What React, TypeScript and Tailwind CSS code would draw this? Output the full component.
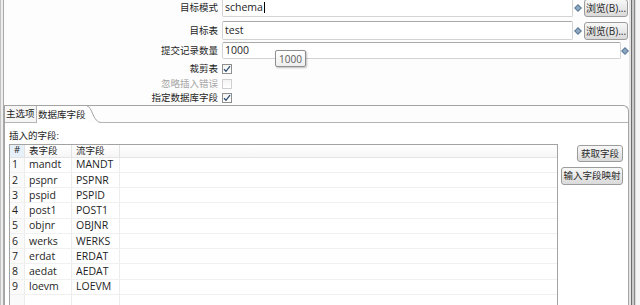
import React from "react";

const fields: [string, string][] = [
  ["mandt", "MANDT"],
  ["pspnr", "PSPNR"],
  ["pspid", "PSPID"],
  ["post1", "POST1"],
  ["objnr", "OBJNR"],
  ["werks", "WERKS"],
  ["erdat", "ERDAT"],
  ["aedat", "AEDAT"],
  ["loevm", "LOEVM"],
];

function Diamond() {
  return (
    <svg width="8" height="8" viewBox="0 0 8 8">
      <polygon points="4,0 8,4 4,8 0,4" fill="#5a7b99" />
      <polygon points="4,1.5 6.5,4 4,6.5 1.5,4" fill="#8fa9c0" />
    </svg>
  );
}

function Check({ checked, disabled }: { checked?: boolean; disabled?: boolean }) {
  return (
    <div
      className={
        "w-[10px] h-[10px] border flex items-center justify-center bg-linear-to-b from-[#f4f4f4] to-[#ffffff] " +
        (disabled ? "border-[#d0d0d0]" : "border-[#8e8f8f]")
      }
    >
      {checked && (
        <svg width="8" height="8" viewBox="0 0 8 8">
          <path d="M1 4.2 L3 6.3 L7 1.2" fill="none" stroke="#2f4f6f" strokeWidth="1.3" />
        </svg>
      )}
    </div>
  );
}

function Btn({ children, className = "" }: { children: React.ReactNode; className?: string }) {
  return (
    <div
      className={
        "flex items-center justify-center border border-[#9c9c9c] rounded-[3px] bg-linear-to-b from-[#f8f8f8] to-[#dadada] text-[#2a2a2a] " +
        className
      }
    >
      {children}
    </div>
  );
}

const input =
  "h-full border border-[#d3d3d3] border-t-[#a9a9a9] rounded-[2px] bg-white pl-[2px] flex items-center";

export default function App() {
  return (
    <div className="w-[640px] h-[305px] overflow-hidden flex bg-[#fdfdfd] text-[10px] text-[#1e1e1e] font-['Open_Sans','Noto_Sans_CJK_SC',sans-serif] leading-none">
      {/* 左侧窗口边框 */}
      <div className="w-[4px] shrink-0 border-l border-l-[#c2c2c2] border-r border-r-[#a8a8a8] bg-[#eeeeee]" />

      <div className="flex-1 flex flex-col min-w-0">
        {/* 表单 */}
        <div className="-mt-[2px] flex flex-col">
          <div className="flex h-[19px] items-center">
            <div className="w-[214px] text-right text-[9.5px]">目标模式</div>
            <div className={"ml-[4px] flex-1 text-[10.5px] " + input + " border-t-[#6f7f8f]"}>
              schema
              <span className="w-[1px] h-[11px] bg-black ml-[1px]" />
            </div>
            <div className="w-[10px] flex justify-center">
              <Diamond />
            </div>
            <Btn className="ml-[1px] mr-[1px] w-[44px] h-[18px]">浏览(B)...</Btn>
          </div>
          <div className="mt-[4px] flex h-[19px] items-center">
            <div className="w-[214px] text-right text-[9.5px]">目标表</div>
            <div className={"ml-[4px] flex-1 text-[10.5px] " + input}>test</div>
            <div className="w-[10px] flex justify-center">
              <Diamond />
            </div>
            <Btn className="ml-[1px] mr-[1px] w-[44px] h-[18px]">浏览(B)...</Btn>
          </div>
          <div className="mt-[2px] flex h-[17px] items-center">
            <div className="w-[214px] text-right text-[9.5px]">提交记录数量</div>
            <div className={"ml-[4px] flex-1 text-[10.5px] " + input}>1000</div>
            <div className="w-[8px] flex justify-center">
              <Diamond />
            </div>
          </div>
          <div className="mt-[2px] flex h-[15px] items-center">
            <div className="w-[214px] text-right text-[9.5px]">裁剪表</div>
            <div className="ml-[4px]">
              <Check checked />
            </div>
          </div>
          <div className="flex h-[15px] items-center">
            <div className="w-[214px] text-right text-[9.5px] text-[#a6a6a6]">忽略插入错误</div>
            <div className="ml-[4px]">
              <Check disabled />
            </div>
          </div>
          <div className="flex h-[14px] items-center">
            <div className="w-[214px] text-right text-[9.5px]">指定数据库字段</div>
            <div className="ml-[4px]">
              <Check checked />
            </div>
          </div>
        </div>

        {/* 选项卡 */}
        <div className="flex-1 flex flex-col border border-[#a4a4a4] border-b-0 rounded-tr-[6px] min-h-0">
          <div className="flex h-[17px] text-[9.5px]">
            <div className="w-[32px] flex items-center pl-[1px] border-r border-b border-[#b4b4b4] bg-[#f6f6f6]">
              主选项
            </div>
            <div className="flex items-center pl-[1px] pr-[1px] bg-white">数据库字段</div>
            <svg width="14" height="17" viewBox="0 0 14 17" className="shrink-0">
              <path d="M0 0 C5 0 6 16.5 14 16.5" fill="#ffffff" stroke="#a4a4a4" strokeWidth="1" />
            </svg>
            <div className="flex-1 border-b border-[#b4b4b4]" />
          </div>

          <div className="flex-1 flex flex-col pl-[4px] pr-[5px] bg-white min-h-0">
            <div className="mt-[5px] h-[15px] flex items-center text-[9.5px]">插入的字段:</div>
            <div className="mt-[1px] flex-1 flex gap-[3px] min-h-0">
              <div className="flex-1 border border-b-0 border-[#a3a3a3] flex flex-col overflow-hidden text-[10.5px]">
                <div className="h-[16px] flex border-b border-[#e4e4e4] bg-linear-to-b from-[#ffffff] to-[#f6f6f6] text-[9.5px]">
                  <div className="w-[15px] relative border-r border-[#e2e2e2] bg-[#e6f0f8] flex items-end justify-center pb-[2px]">
                    <svg width="5" height="3" viewBox="0 0 5 3" className="absolute top-[1px] left-[5px]">
                      <path d="M0.5 2.5 L2.5 0.5 L4.5 2.5" fill="none" stroke="#7a8a9a" strokeWidth="0.8" />
                    </svg>
                    #
                  </div>
                  <div className="w-[47px] border-r border-[#e2e2e2] flex items-center pl-[4px]">表字段</div>
                  <div className="w-[48px] border-r border-[#e2e2e2] flex items-center pl-[4px]">流字段</div>
                  <div className="flex-1" />
                </div>
                {[...fields, ["", ""] as [string, string]].map(([a, b], i) => (
                  <div key={i} className="h-[15.25px] shrink-0 flex border-b border-[#f0f0f0]">
                    <div className="w-[15px] border-r border-[#ececec] flex items-center pl-[2px] bg-[#fafafa]">
                      {a ? i + 1 : ""}
                    </div>
                    <div className="w-[47px] border-r border-[#ececec] flex items-center pl-[4px]">{a}</div>
                    <div className="w-[48px] border-r border-[#ececec] flex items-center pl-[4px]">{b}</div>
                    <div className="flex-1" />
                  </div>
                ))}
              </div>
              <div className="w-[62px] flex flex-col items-end gap-[5px] pt-[1px] text-[9.5px]">
                <Btn className="w-[46px] h-[17px]">获取字段</Btn>
                <Btn className="w-[62px] h-[18px]">输入字段映射</Btn>
              </div>
            </div>
          </div>
        </div>
      </div>

      {/* 右侧窗口边框 */}
      <div className="w-[11px] shrink-0 flex">
        <div className="w-[2px] bg-[#e4e4e4]" />
        <div className="w-[1px] bg-[#6e6e6e]" />
        <div className="w-[2px] bg-[#c9c9c9]" />
        <div className="w-[1px] bg-[#8a8a8a]" />
        <div className="w-[1px] bg-[#d8d8d8]" />
        <div className="flex-1 bg-[#f4f4f4]" />
      </div>

      {/* 提示框 */}
      <div className="absolute left-[275px] top-[50px] w-[31px] h-[17px] border border-[#8f8f8f] rounded-[2px] bg-linear-to-b from-[#ffffff] to-[#eeeeee] shadow-[1px_1px_2px_rgba(0,0,0,0.25)] flex items-center justify-center text-[#5a5a5a]">
        1000
      </div>
    </div>
  );
}
